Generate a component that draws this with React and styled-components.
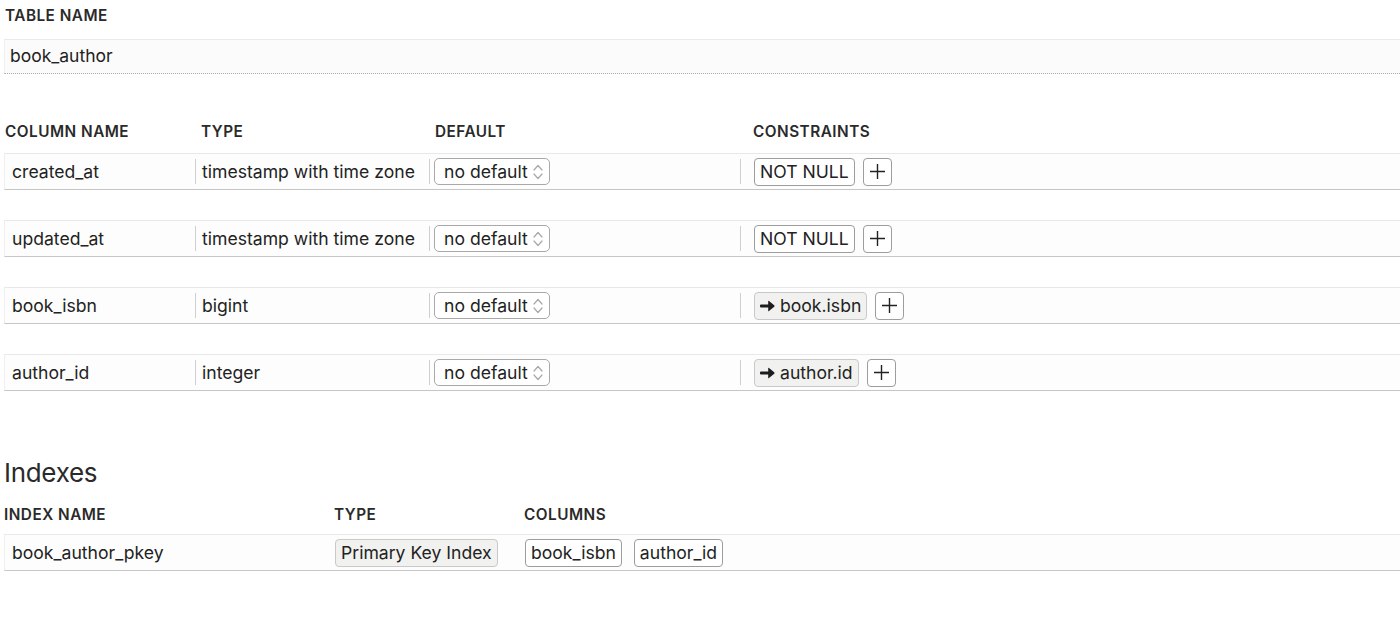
import React from 'react';
import styled, { createGlobalStyle } from 'styled-components';

const GlobalStyle = createGlobalStyle`
  html, body {
    margin: 0;
    padding: 0;
    background: #fff;
    overflow: hidden;
  }
  body {
    font-family: Inter, "Liberation Sans", sans-serif;
    color: #222;
  }
`;

const Page = styled.div`
  width: 1440px;
  padding: 6px 0 0 4px;
`;

const Label = styled.div`
  font-size: 15.3px;
  font-weight: 600;
  letter-spacing: 0.5px;
  color: #2a2a2a;
  line-height: 20px;
  padding-left: ${p => p.$indent || 1}px;
`;

const NameInput = styled.div`
  margin-top: 13px;
  height: 35px;
  display: flex;
  align-items: center;
  padding: 0 0 2px 5px;
  box-sizing: border-box;
  font-size: 17.5px;
  background: #fbfbfb;
  border-top: 1px solid #e9e9e9;
  border-left: 1px solid #f0f0f0;
  border-bottom: 1px dotted #a9a9a9;
`;

const ColGrid = styled.div`
  display: grid;
  grid-template-columns: ${p => p.$cols};
  align-items: center;
`;

const HeadRow = styled(ColGrid)`
  margin-top: 48px;
  margin-bottom: 11px;
`;

const HeadCell = styled(Label)`
  padding-left: ${p => p.$pad}px;
`;

const RowList = styled.div`
  display: flex;
  flex-direction: column;
  gap: 30px;
`;

const Row = styled(ColGrid)`
  height: 35px;
  background: #fdfdfd;
  border-top: 1px solid #e8e8e8;
  border-left: 1px solid #efefef;
  border-bottom: 1px solid #c6c6c6;
  font-size: 17.6px;
`;

const Cell = styled.div`
  position: relative;
  height: 100%;
  display: flex;
  align-items: center;
  gap: ${p => p.$gap || 0}px;
  padding-left: ${p => p.$pad}px;

  ${p => p.$sep && `
    &::before {
      content: '';
      position: absolute;
      left: 0;
      top: 5px;
      bottom: 5px;
      width: 1px;
      background: #cfcfcf;
    }
  `}
`;

const Select = styled.div`
  height: 25px;
  display: flex;
  align-items: center;
  gap: 3px;
  padding: 0 4px 0 9px;
  border: 1px solid #a9a9a9;
  border-radius: 5px;
  background: #fff;
  font-size: 17.6px;
`;

const Chip = styled.div`
  height: 26px;
  display: flex;
  align-items: center;
  gap: 5px;
  padding: 0 ${p => p.$px || 5}px;
  border: 1px solid ${p => (p.$filled ? '#c9c9c9' : '#9d9d9d')};
  border-radius: 4px;
  background: ${p => (p.$filled ? '#f1f1ef' : '#fff')};
  font-size: 17.6px;
  white-space: nowrap;
`;

const PlusButton = styled.div`
  width: 27px;
  height: 26px;
  display: flex;
  align-items: center;
  justify-content: center;
  border: 1px solid #9d9d9d;
  border-radius: 4px;
  background: #fff;
`;

const Heading = styled.h2`
  margin: 66px 0 0;
  font-size: 26px;
  font-weight: 400;
  line-height: 32px;
  color: #2a2a2a;
  letter-spacing: -0.3px;
`;

const IndexHead = styled(ColGrid)`
  margin-top: 16px;
  margin-bottom: 9px;
`;

const Chevrons = () => (
  <svg width="14" height="18" viewBox="0 0 14 18" fill="none" stroke="#a8a8a8" strokeWidth="1.2" strokeLinecap="round" strokeLinejoin="round">
    <path d="M3 7 L7 2.5 L11 7" />
    <path d="M3 11 L7 15.5 L11 11" />
  </svg>
);

const Plus = () => (
  <svg width="17" height="17" viewBox="0 0 17 17" stroke="#222" strokeWidth="1.4">
    <path d="M8.5 1 V16 M1 8.5 H16" />
  </svg>
);

const Arrow = () => (
  <svg width="15" height="12" viewBox="0 0 15 12" fill="#1d1d1d">
    <path d="M1 4.4 H8.2 V1.2 Q8.2 0.3 9 0.9 L14.2 5.2 Q14.9 6 14.2 6.8 L9 11.1 Q8.2 11.7 8.2 10.8 V7.6 H1 Q0 7.6 0 6.6 V5.4 Q0 4.4 1 4.4 Z" />
  </svg>
);

const COLS = '190px 234px 311px 1fr';
const INDEX_COLS = '330px 190px 1fr';

const columns = [
  { name: 'created_at', type: 'timestamp with time zone', constraint: { text: 'NOT NULL' } },
  { name: 'updated_at', type: 'timestamp with time zone', constraint: { text: 'NOT NULL' } },
  { name: 'book_isbn', type: 'bigint', constraint: { text: 'book.isbn', ref: true } },
  { name: 'author_id', type: 'integer', constraint: { text: 'author.id', ref: true } }
];

export default function App() {
  return (
    <>
      <GlobalStyle />
      <Page>
        <Label>TABLE NAME</Label>
        <NameInput>book_author</NameInput>

        <HeadRow $cols={COLS}>
          <HeadCell $pad={1}>COLUMN NAME</HeadCell>
          <HeadCell $pad={7}>TYPE</HeadCell>
          <HeadCell $pad={7}>DEFAULT</HeadCell>
          <HeadCell $pad={14}>CONSTRAINTS</HeadCell>
        </HeadRow>

        <RowList>
          {columns.map(col => (
            <Row key={col.name} $cols={COLS}>
              <Cell $pad={7}>{col.name}</Cell>
              <Cell $pad={7} $sep>{col.type}</Cell>
              <Cell $pad={5} $sep>
                <Select>
                  no default
                  <Chevrons />
                </Select>
              </Cell>
              <Cell $pad={14} $sep $gap={8}>
                {col.constraint.ref ? (
                  <Chip $filled>
                    <Arrow />
                    {col.constraint.text}
                  </Chip>
                ) : (
                  <Chip>{col.constraint.text}</Chip>
                )}
                <PlusButton>
                  <Plus />
                </PlusButton>
              </Cell>
            </Row>
          ))}
        </RowList>

        <Heading>Indexes</Heading>
        <IndexHead $cols={INDEX_COLS}>
          <HeadCell $pad={0}>INDEX NAME</HeadCell>
          <HeadCell $pad={0}>TYPE</HeadCell>
          <HeadCell $pad={0}>COLUMNS</HeadCell>
        </IndexHead>
        <Row $cols={INDEX_COLS}>
          <Cell $pad={7}>book_author_pkey</Cell>
          <Cell $pad={0}>
            <Chip $filled>Primary Key Index</Chip>
          </Cell>
          <Cell $pad={0} $gap={12}>
            <Chip>book_isbn</Chip>
            <Chip>author_id</Chip>
          </Cell>
        </Row>
      </Page>
    </>
  );
}
